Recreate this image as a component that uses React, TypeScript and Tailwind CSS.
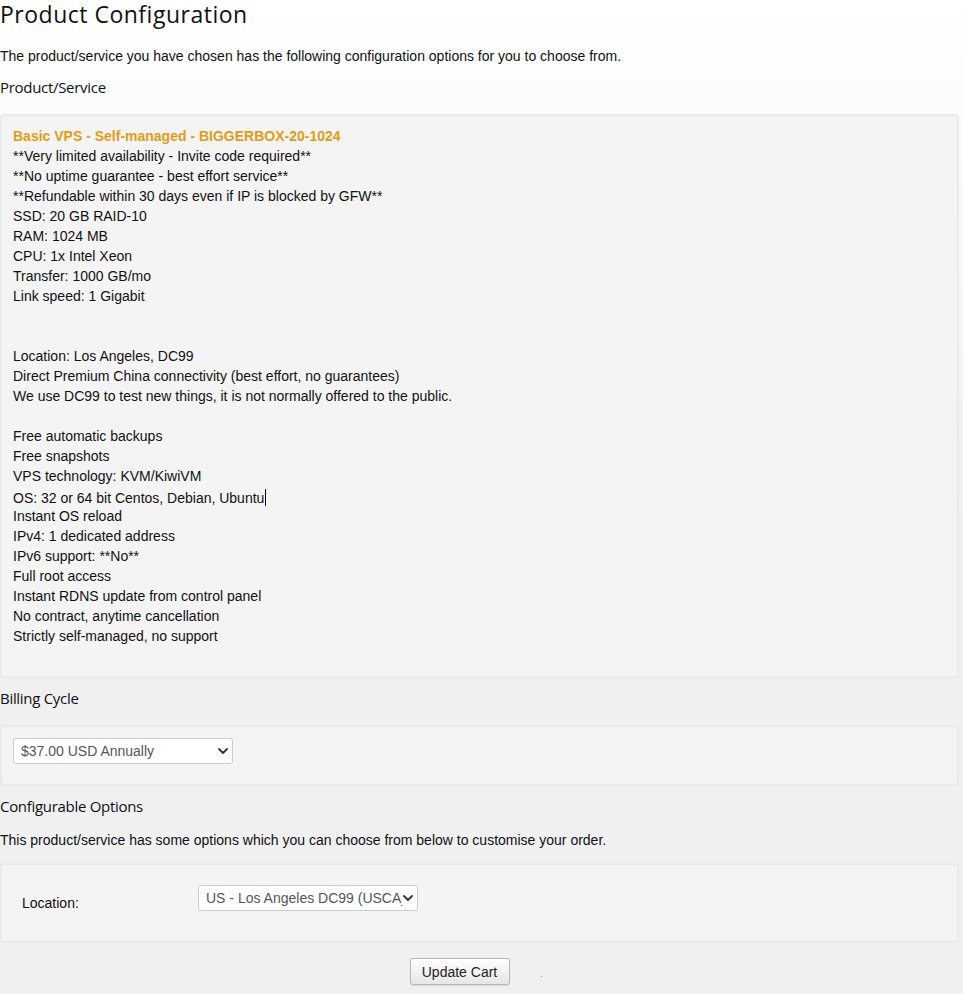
import React from "react";

const features: string[] = [
  "**Very limited availability - Invite code required**",
  "**No uptime guarantee - best effort service**",
  "**Refundable within 30 days even if IP is blocked by GFW**",
  "SSD: 20 GB RAID-10",
  "RAM: 1024 MB",
  "CPU: 1x Intel Xeon",
  "Transfer: 1000 GB/mo",
  "Link speed: 1 Gigabit",
  "",
  "",
  "Location: Los Angeles, DC99",
  "Direct Premium China connectivity (best effort, no guarantees)",
  "We use DC99 to test new things, it is not normally offered to the public.",
  "",
  "Free automatic backups",
  "Free snapshots",
  "VPS technology: KVM/KiwiVM",
  "OS: 32 or 64 bit Centos, Debian, Ubuntu",
  "Instant OS reload",
  "IPv4: 1 dedicated address",
  "IPv6 support: **No**",
  "Full root access",
  "Instant RDNS update from control panel",
  "No contract, anytime cancellation",
  "Strictly self-managed, no support",
  "",
];

const Chevron = () => (
  <svg
    width="10"
    height="6"
    viewBox="0 0 10 6"
    className="pointer-events-none absolute right-[5px] top-1/2 -translate-y-1/2"
  >
    <path
      d="M1 1l4 4 4-4"
      fill="none"
      stroke="#333"
      strokeWidth="1.8"
      strokeLinecap="round"
      strokeLinejoin="round"
    />
  </svg>
);

const FakeSelect: React.FC<{ value: string }> = ({ value }) => (
  <div className="relative w-[220px]">
    <select
      defaultValue={value}
      className="h-[26px] w-full appearance-none overflow-hidden whitespace-nowrap rounded-[3px] border border-[#cccccc] bg-white pl-[7px] pr-[15px] text-[14px] text-[#555555] outline-none"
    >
      <option>{value}</option>
    </select>
    <Chevron />
  </div>
);

const Heading: React.FC<{ children: React.ReactNode }> = ({ children }) => (
  <h2 className="h-[20px] text-[15px] leading-[20px] tracking-[-0.3px] text-[#111] [font-family:'Open_Sans',sans-serif]">
    {children}
  </h2>
);

const Box: React.FC<{ className?: string; children: React.ReactNode }> = ({
  className = "",
  children,
}) => (
  <div
    className={`mr-[4px] rounded-[4px] border-2 border-[#eaeaea] bg-[#f4f4f4] ${className}`}
  >
    {children}
  </div>
);

export default function App() {
  return (
    <div className="min-h-[994px] bg-[linear-gradient(#ffffff_0px,#f0f0f0_520px)] text-[14px] leading-[20px] text-[#111] [font-family:'Liberation_Sans',Arial,sans-serif]">
      <h1 className="text-[23px] leading-[28px] tracking-[0.5px] text-[#111] [font-family:'Open_Sans',sans-serif]">
        Product Configuration
      </h1>

      <p className="mt-[18px]">
        The product/service you have chosen has the following configuration
        options for you to choose from.
      </p>

      <div className="mt-[11px]">
        <Heading>Product/Service</Heading>
      </div>

      <Box className="mt-[17px] pb-[10px] pl-[11px] pt-[10px]">
        <div className="font-bold text-[#e39c17]">
          Basic VPS - Self-managed - BIGGERBOX-20-1024
        </div>
        {features.map((line, i) => (
          <div key={i} className="h-[20px] whitespace-nowrap">
            {line}
            {line.startsWith("OS:") && (
              <span className="ml-[1px] inline-block h-[17px] w-[1px] translate-y-[3px] bg-black" />
            )}
          </div>
        ))}
      </Box>

      <div className="mt-[10px]">
        <Heading>Billing Cycle</Heading>
      </div>

      <Box className="mt-[17px] pb-[20px] pl-[11px] pt-[11px]">
        <FakeSelect value="$37.00 USD Annually" />
      </Box>

      <div className="mt-[10px]">
        <Heading>Configurable Options</Heading>
      </div>

      <p className="mt-[14px]">
        This product/service has some options which you can choose from below
        to customise your order.
      </p>

      <Box className="mt-[13px] pb-[28px] pl-[20px] pt-[20px]">
        <div className="flex items-start">
          <div className="w-[176px] pt-[8px]">Location:</div>
          <FakeSelect value="US - Los Angeles DC99 (USCA_" />
        </div>
      </Box>

      <div className="mt-[15px] flex items-center justify-center pr-[12px]">
        <button className="h-[27px] w-[100px] rounded-[3px] border border-[#b5b5b5] bg-[linear-gradient(#ffffff,#e6e6e6)] text-[14px] text-[#222] shadow-[0_1px_1px_rgba(0,0,0,0.08)]">
          Update Cart
        </button>
        <span className="ml-[31px] mt-[10px] h-[1px] w-[1px] bg-[#999]" />
      </div>
    </div>
  );
}
